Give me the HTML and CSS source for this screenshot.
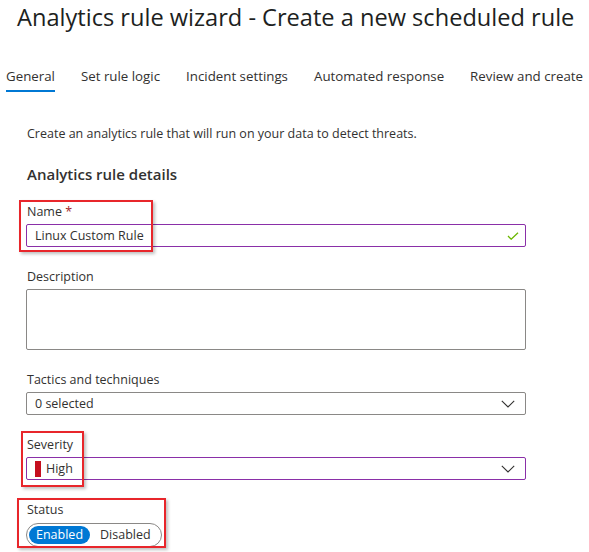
FILE: index.html
```html
<!DOCTYPE html>
<html>
<head>
<meta charset="utf-8">
<link rel="stylesheet" href="styles.css">
</head>
<body>
<div class="page">
  <h1 class="title">Analytics rule wizard - Create a new scheduled rule</h1>
  <nav class="tabs">
    <span class="tab active">General</span>
    <span class="tab">Set rule logic</span>
    <span class="tab">Incident settings</span>
    <span class="tab">Automated response</span>
    <span class="tab">Review and create</span>
  </nav>
  <div class="content">
    <p class="intro">Create an analytics rule that will run on your data to detect threats.</p>
    <h2 class="section">Analytics rule details</h2>

    <div class="field">
      <div class="mark mark-name"></div>
      <label class="label">Name <span class="req">*</span></label>
      <div class="input focus">
        <span class="value">Linux Custom Rule</span>
        <svg class="check" width="12" height="8" viewBox="0 0 12 8"><path d="M1 4 L4.2 7.2 L11 0.8" fill="none" stroke="#6bb700" stroke-width="1.3"/></svg>
      </div>
    </div>

    <div class="field">
      <label class="label">Description</label>
      <div class="textarea"></div>
    </div>

    <div class="field">
      <label class="label">Tactics and techniques</label>
      <div class="input">
        <span class="value">0 selected</span>
        <svg class="chev" width="14" height="8" viewBox="0 0 14 8"><path d="M0.8 0.8 L7 7 L13.2 0.8" fill="none" stroke="#323130" stroke-width="1.1"/></svg>
      </div>
    </div>

    <div class="field">
      <div class="mark mark-sev"></div>
      <label class="label">Severity</label>
      <div class="input focus">
        <span class="sevbar"></span>
        <span class="value">High</span>
        <svg class="chev" width="14" height="8" viewBox="0 0 14 8"><path d="M0.8 0.8 L7 7 L13.2 0.8" fill="none" stroke="#323130" stroke-width="1.1"/></svg>
      </div>
    </div>

    <div class="field">
      <div class="mark mark-status"></div>
      <label class="label">Status</label>
      <div class="toggle">
        <span class="opt on">Enabled</span>
        <span class="opt">Disabled</span>
      </div>
    </div>
  </div>
</div>
</body>
</html>
```
FILE: styles.css
```css
html, body {
  margin: 0;
  padding: 0;
  background: #ffffff;
}
body {
  font-family: "Open Sans", "Noto Sans", sans-serif;
  color: #323130;
}
.page {
  width: 589px;
  height: 552px;
  overflow: hidden;
}
.title {
  margin: 0;
  padding: 0 0 0 17px;
  height: 38px;
  line-height: 34px;
  font-size: 23.6px;
  font-weight: 400;
  white-space: nowrap;
  color: #201f1e;
}
.tabs {
  display: flex;
  gap: 26px;
  margin-top: 24px;
  padding-left: 6px;
  height: 30px;
  font-size: 13.3px;
}
.tab {
  position: relative;
  line-height: 28px;
  white-space: nowrap;
}
.tab.active::after {
  content: "";
  position: absolute;
  left: 0;
  right: 0;
  bottom: 0;
  height: 2px;
  background: #0078d4;
}
.content {
  padding-left: 26px;
  width: 500px;
}
.intro {
  margin: 32px 0 0 1px;
  line-height: 20px;
  font-size: 12.5px;
}
.section {
  margin: 20px 0 18px 1px;
  line-height: 20px;
  font-size: 15px;
  font-weight: 600;
}
.field {
  position: relative;
  margin-bottom: 20px;
}
.label {
  display: block;
  line-height: 20px;
  margin-bottom: 2px;
  padding-left: 1px;
  font-size: 12.5px;
}
.req {
  color: #a4262c;
}
.input {
  box-sizing: border-box;
  height: 23px;
  border: 1px solid #8a8886;
  border-radius: 2px;
  display: flex;
  align-items: center;
  padding: 0 12px 0 8px;
  font-size: 12.5px;
}
.input.focus {
  border-color: #8a2fa8;
}
.value {
  flex: 1;
  white-space: nowrap;
}
.check {
  display: block;
  margin-right: -6px;
}
.chev {
  display: block;
  margin-right: -2px;
}
.sevbar {
  width: 6px;
  height: 16px;
  background: #c50f1f;
  margin-right: 5px;
}
.textarea {
  box-sizing: border-box;
  height: 61px;
  border: 1px solid #8a8886;
  border-radius: 2px;
}
.toggle {
  box-sizing: border-box;
  display: inline-flex;
  align-items: center;
  width: 136px;
  height: 24px;
  border: 1px solid #8a8886;
  border-radius: 12px;
  padding: 0 2px;
  font-size: 12.5px;
}
.opt {
  line-height: 18px;
  padding: 0 7px;
  border-radius: 10px;
}
.opt.on {
  background: #0078d4;
  color: #ffffff;
  margin-right: 3px;
}
.mark {
  position: absolute;
  border: 2px solid #e8262b;
  box-shadow: 2px 2px 3px rgba(0, 0, 0, 0.25);
  pointer-events: none;
}
.mark-name {
  left: -7px;
  top: -2px;
  width: 130px;
  height: 48px;
}
.mark-sev {
  left: -5px;
  top: -4px;
  width: 59px;
  height: 52px;
}
.mark-status {
  left: -9px;
  top: -2px;
  width: 145px;
  height: 46px;
}
```
